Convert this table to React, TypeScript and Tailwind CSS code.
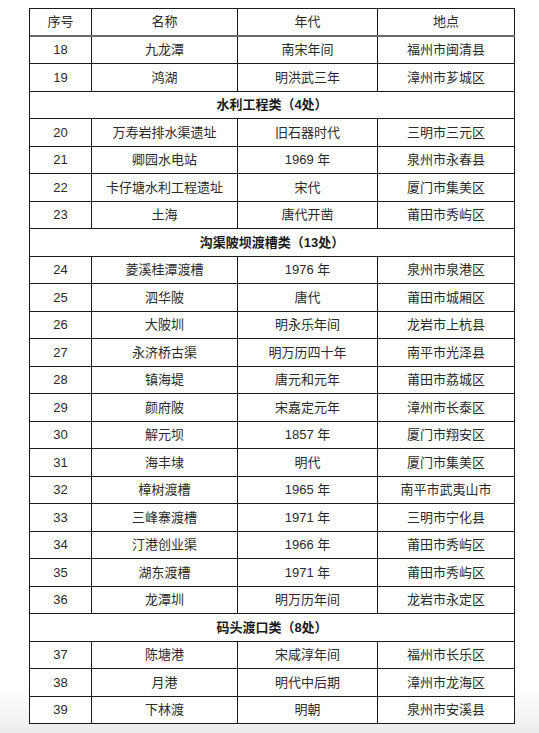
import React from "react";

type Row = { kind: "row"; c: [string, string, string, string] } | { kind: "section"; t: string };

const rows: Row[] = [
  { kind: "row", c: ["18", "九龙潭", "南宋年间", "福州市闽清县"] },
  { kind: "row", c: ["19", "鸿湖", "明洪武三年", "漳州市芗城区"] },
  { kind: "section", t: "水利工程类（4处）" },
  { kind: "row", c: ["20", "万寿岩排水渠遗址", "旧石器时代", "三明市三元区"] },
  { kind: "row", c: ["21", "卿园水电站", "1969 年", "泉州市永春县"] },
  { kind: "row", c: ["22", "卡仔塘水利工程遗址", "宋代", "厦门市集美区"] },
  { kind: "row", c: ["23", "土海", "唐代开凿", "莆田市秀屿区"] },
  { kind: "section", t: "沟渠陂坝渡槽类（13处）" },
  { kind: "row", c: ["24", "菱溪桂潭渡槽", "1976 年", "泉州市泉港区"] },
  { kind: "row", c: ["25", "泗华陂", "唐代", "莆田市城厢区"] },
  { kind: "row", c: ["26", "大陂圳", "明永乐年间", "龙岩市上杭县"] },
  { kind: "row", c: ["27", "永济桥古渠", "明万历四十年", "南平市光泽县"] },
  { kind: "row", c: ["28", "镇海堤", "唐元和元年", "莆田市荔城区"] },
  { kind: "row", c: ["29", "颜府陂", "宋嘉定元年", "漳州市长泰区"] },
  { kind: "row", c: ["30", "解元坝", "1857 年", "厦门市翔安区"] },
  { kind: "row", c: ["31", "海丰埭", "明代", "厦门市集美区"] },
  { kind: "row", c: ["32", "樟树渡槽", "1965 年", "南平市武夷山市"] },
  { kind: "row", c: ["33", "三峰寨渡槽", "1971 年", "三明市宁化县"] },
  { kind: "row", c: ["34", "汀港创业渠", "1966 年", "莆田市秀屿区"] },
  { kind: "row", c: ["35", "湖东渡槽", "1971 年", "莆田市秀屿区"] },
  { kind: "row", c: ["36", "龙潭圳", "明万历年间", "龙岩市永定区"] },
  { kind: "section", t: "码头渡口类（8处）" },
  { kind: "row", c: ["37", "陈塘港", "宋咸淳年间", "福州市长乐区"] },
  { kind: "row", c: ["38", "月港", "明代中后期", "漳州市龙海区"] },
  { kind: "row", c: ["39", "下林渡", "明朝", "泉州市安溪县"] },
];

const widths = ["w-[62px]", "w-[146px]", "w-[140px]", "w-[137px]"];

function Cells({ c }: { c: string[] }) {
  return (
    <>
      {c.map((t, i) => (
        <div
          key={i}
          className={`${widths[i]} shrink-0 h-full flex items-center justify-center border-r border-[#1a1a1a] ${i === 3 ? "" : ""}`}
        >
          {t}
        </div>
      ))}
    </>
  );
}

export default function App() {
  return (
    <div
      className="w-[539px] h-[733px] overflow-hidden bg-[linear-gradient(to_bottom,#ffffff_0%,#ffffff_94%,#ececec_100%)] pt-[8px] pl-[29px]"
      style={{ fontFamily: '"Liberation Sans", "Noto Sans CJK SC", sans-serif' }}
    >
      <div className="w-[486px] border-t border-l border-[#1a1a1a] bg-white text-[13px] text-[#2a2a2a] leading-none">
        <div className="flex h-[27.5px] border-b-2 border-[#6a6a6a]">
          <Cells c={["序号", "名称", "年代", "地点"]} />
        </div>
        {rows.map((r, idx) =>
          r.kind === "row" ? (
            <div key={idx} className="flex h-[27.5px] border-b border-[#1a1a1a]">
              <Cells c={r.c} />
            </div>
          ) : (
            <div
              key={idx}
              className="flex h-[27.5px] items-center justify-center border-b border-r border-[#1a1a1a] font-bold text-[#1a1a1a]"
            >
              {r.t}
            </div>
          )
        )}
      </div>
    </div>
  );
}
